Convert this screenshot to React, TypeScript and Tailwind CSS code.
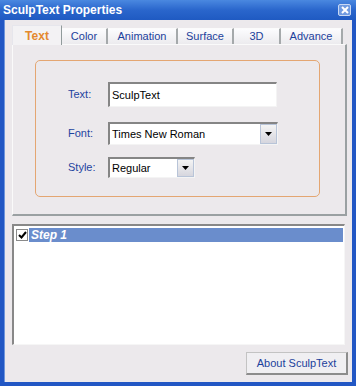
import React from "react";

const tabs = [
  { label: "Text", w: 50 },
  { label: "Color", w: 46 },
  { label: "Animation", w: 70 },
  { label: "Surface", w: 56 },
  { label: "3D", w: 47 },
  { label: "Advance", w: 62 },
];

function DropArrow() {
  return (
    <div className="flex h-full w-[17px] items-center justify-center border border-[#b8c4d8] bg-gradient-to-b from-[#f4f4f4] to-[#d6d6de]">
      <svg width="7" height="4" viewBox="0 0 7 4">
        <path d="M0 0h7L3.5 4z" fill="#000" />
      </svg>
    </div>
  );
}

export default function App() {
  return (
    <div
      className="flex h-[386px] w-[356px] flex-col bg-[#2257c4] text-[11px]"
      style={{ fontFamily: '"Liberation Sans", Arial, sans-serif' }}
    >
      {/* title bar */}
      <div className="flex h-[20px] shrink-0 items-center justify-between bg-gradient-to-b from-[#4a88e0] via-[#2a66cc] to-[#1f5ac2] pl-[3px] pr-[5px]">
        <span className="text-[12px] font-bold text-white">SculpText Properties</span>
        <div className="flex h-[12px] w-[13px] items-center justify-center rounded-[2px] bg-[#6f9ae0] border border-[#c8d8f4]">
          <svg width="8" height="8" viewBox="0 0 8 8">
            <path d="M1 1l6 6M7 1L1 7" stroke="#fff" strokeWidth="2" />
          </svg>
        </div>
      </div>

      {/* client area */}
      <div className="mx-[4px] mb-[4px] flex flex-1 flex-col bg-[#ece9ec] border-l border-[#6f96dc]">
        {/* tabs */}
        <div className="ml-[7px] mt-[5px] flex h-[19px] items-end">
          {tabs.map((t, i) =>
            i === 0 ? (
              <div
                key={t.label}
                style={{ width: t.w }}
                className="relative z-10 -mb-px flex h-[20px] items-center justify-center border-x border-t border-[#e6e6ec] border-r-[#919b9c] bg-[#f3f2f4] text-[12px] font-bold text-[#e4892e]"
              >
                {t.label}
              </div>
            ) : (
              <div
                key={t.label}
                style={{ width: t.w }}
                className="flex h-[16px] items-center justify-center border-t border-[#fbfbfb] border-r-2 border-r-[#a5a9ab] bg-gradient-to-b from-[#fcfcfe] to-[#ecebee] text-[#1c3f9c]"
              >
                {t.label}
              </div>
            )
          )}
        </div>

        {/* tab panel */}
        <div className="ml-[7px] flex h-[172px] w-[335px] flex-col border-l border-t border-[#fafafa] border-r-2 border-b-2 border-r-[#9aa0a2] border-b-[#9aa0a2] bg-[#ece9ec]">
          <div className="ml-[22px] mt-[15px] flex h-[137px] w-[285px] flex-col rounded-[5px] border border-[#e4a672] pl-[32px]">
            <div className="mt-[21px] flex h-[25px] items-center">
              <span className="w-[40px] text-[#1e44a0]">Text:</span>
              <div className="flex h-full w-[169px] items-center border-t-2 border-l-2 border-[#858585] border-b border-r border-b-[#f4f4f4] border-r-[#f4f4f4] bg-white pl-[2px] text-black">
                SculpText
              </div>
            </div>
            <div className="mt-[15px] flex h-[23px] items-center">
              <span className="w-[40px] text-[#1e44a0]">Font:</span>
              <div className="flex h-full w-[170px] items-center border-t-2 border-l-2 border-[#858585] border-b border-r border-b-[#f4f4f4] border-r-[#f4f4f4] bg-white pl-[2px] text-black">
                <span className="flex-1">Times New Roman</span>
                <DropArrow />
              </div>
            </div>
            <div className="mt-[12px] flex h-[21px] items-center">
              <span className="w-[40px] text-[#1e44a0]">Style:</span>
              <div className="flex h-full w-[87px] items-center border-t-2 border-l-2 border-[#858585] border-b border-r border-b-[#f4f4f4] border-r-[#f4f4f4] bg-white pl-[2px] text-black">
                <span className="flex-1">Regular</span>
                <DropArrow />
              </div>
            </div>
          </div>
        </div>

        {/* step list */}
        <div className="ml-[7px] mt-[8px] flex h-[121px] w-[333px] flex-col border-t-2 border-l-2 border-[#888] border-b border-r border-b-[#f6f6f6] border-r-[#f6f6f6] bg-white pl-[2px] pr-[1px] pt-[2px]">
          <div className="flex h-[14px] items-center">
            <div className="flex h-[12px] w-[12px] items-center justify-center border border-[#8a8a8a] bg-white">
              <svg width="9" height="8" viewBox="0 0 9 8">
                <path d="M1 4l2.5 2.5L8 1" stroke="#000" strokeWidth="2" fill="none" />
              </svg>
            </div>
            <div className="ml-[1px] flex h-full flex-1 items-center bg-[#6a8dcc] pl-[2px] text-[12px] font-bold italic text-white">
              Step 1
            </div>
          </div>
        </div>

        {/* footer */}
        <div className="mt-[7px] flex justify-end pr-[4px]">
          <div className="flex h-[23px] w-[102px] items-center justify-center border border-[#c3c3c3] border-r-2 border-b-2 border-r-[#8c8c8c] border-b-[#8c8c8c] bg-[#f0eff2] text-[#1c3f9c]">
            About SculpText
          </div>
        </div>
      </div>
    </div>
  );
}
